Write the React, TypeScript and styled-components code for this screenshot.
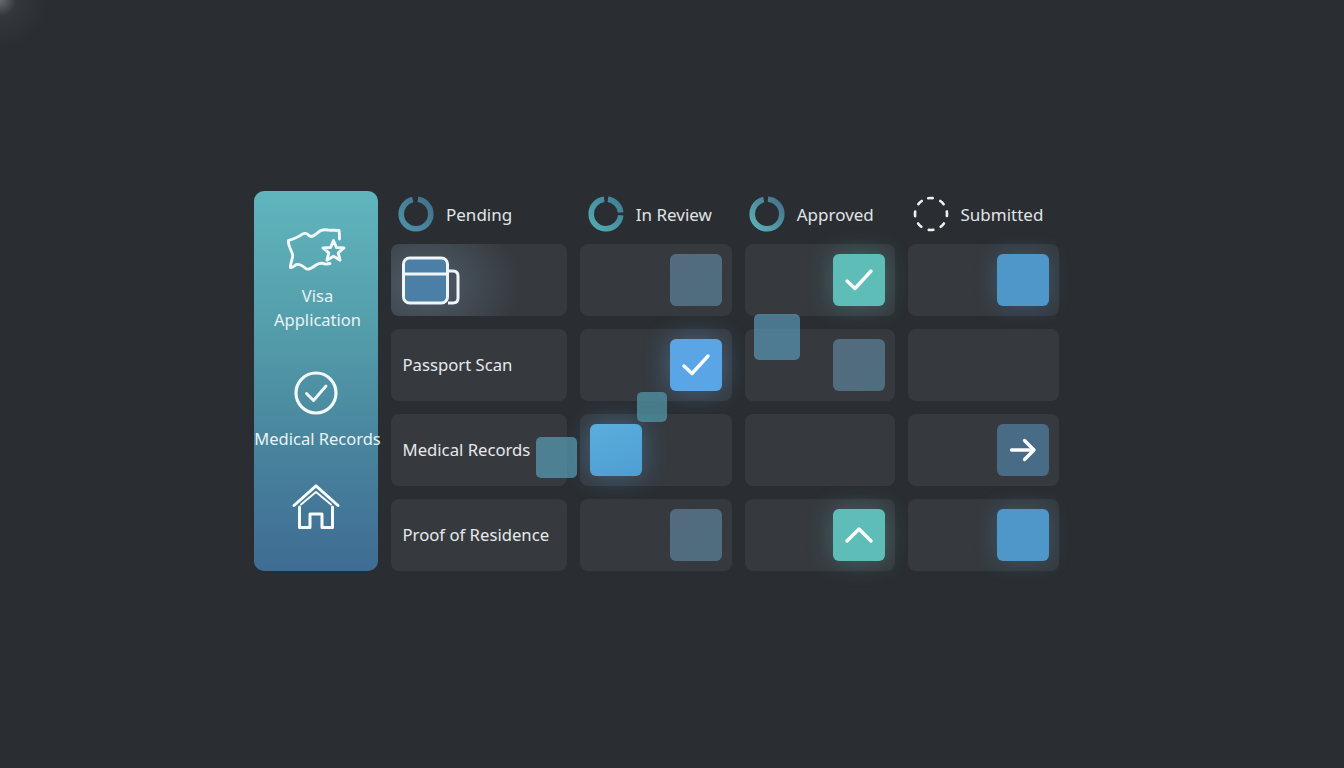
import styled, { createGlobalStyle, css } from "styled-components";

const GlobalStyle = createGlobalStyle`
  html, body {
    margin: 0;
    padding: 0;
    height: 100%;
    background: #2a2e32;
  }
  body {
    font-family: "Noto Sans", "Open Sans", sans-serif;
    overflow: hidden;
  }
`;

const Page = styled.div`
  width: 1344px;
  height: 768px;
  box-sizing: border-box;
  padding: 191px 0 0 254px;
  background:
    radial-gradient(circle at 0 0, rgba(190, 195, 200, 0.42) 0, rgba(120, 125, 130, 0.12) 16px, rgba(42, 46, 50, 0) 48px),
    #2a2e32;
`;

const Board = styled.div`
  position: relative;
  display: flex;
  gap: 13px;
  width: 805px;
`;

const Sidebar = styled.nav`
  width: 124px;
  height: 380px;
  box-sizing: border-box;
  padding-top: 37px;
  display: flex;
  flex-direction: column;
  align-items: center;
  border-radius: 10px;
  background: linear-gradient(180deg, #60b5bd 0%, #549eab 35%, #47829c 70%, #3f6c93 100%);
  color: #e9f3f5;
`;

const NavItem = styled.div<{ $after: number; $gap: number }>`
  display: flex;
  flex-direction: column;
  align-items: center;
  gap: ${(p) => p.$gap}px;
  margin-bottom: ${(p) => p.$after}px;
`;

const NavLabel = styled.div`
  font-size: 16.5px;
  line-height: 24px;
  padding-left: 3px;
  text-align: center;
  white-space: nowrap;
`;

const Table = styled.div`
  display: grid;
  grid-template-columns: 176px 152.25px 150px 151px;
  grid-template-rows: 40px repeat(4, 72px);
  column-gap: 12.75px;
  row-gap: 13px;
`;

const HeaderCell = styled.div<{ $inset: number }>`
  display: flex;
  align-items: center;
  gap: 12px;
  padding-left: ${(p) => p.$inset}px;
  height: 46px;
  color: #e0e4e6;
  font-size: 17px;
`;

const Cell = styled.div<{ $glow?: boolean; $start?: boolean }>`
  display: flex;
  align-items: center;
  justify-content: ${(p) => (p.$start ? "flex-start" : "flex-end")};
  box-sizing: border-box;
  padding: 0 10px;
  border-radius: 8px;
  background: #363a3f;
  ${(p) =>
    p.$glow &&
    css`
      background: radial-gradient(ellipse 95px 75px at 35px 40px, #4f5e6a 0, #3e454c 65%, #363a3f 100%);
    `}
`;

const RowLabel = styled(Cell)`
  justify-content: flex-start;
  padding: 0 0 2px 11.5px;
  font-size: 16.7px;
  color: #e6e9eb;
  white-space: nowrap;
`;

const tones = {
  muted: css`
    background: linear-gradient(135deg, #536c7e, #4f6d7f);
  `,
  slate: css`
    background: #486b86;
  `,
  teal: css`
    background: #5fbdb8;
    box-shadow: 0 0 24px rgba(96, 189, 185, 0.34);
  `,
  blue: css`
    background: #4f97c8;
    box-shadow: 0 0 22px rgba(79, 151, 210, 0.3);
  `,
  bright: css`
    background: #5aa5e6;
    box-shadow: 0 0 26px rgba(90, 165, 230, 0.42);
  `,
  sky: css`
    background: linear-gradient(160deg, #5aaedd, #4f9dd3);
    box-shadow: 0 0 26px rgba(80, 160, 225, 0.42);
  `,
};

const Tile = styled.div<{ $tone: keyof typeof tones }>`
  width: 52px;
  height: 52px;
  flex: none;
  display: flex;
  align-items: center;
  justify-content: center;
  border-radius: 6px;
  ${(p) => tones[p.$tone]}
`;

const Floater = styled.div<{ $x: number; $y: number; $size: number; $color: string }>`
  position: absolute;
  left: ${(p) => p.$x}px;
  top: ${(p) => p.$y}px;
  width: ${(p) => p.$size}px;
  height: ${(p) => p.$size}px;
  border-radius: 5px;
  background: ${(p) => p.$color};
`;

function Ring({ id, from, to, dash, offset }: { id: string; from: string; to: string; dash: string; offset: number }) {
  return (
    <svg width="36" height="36" viewBox="0 0 36 36" fill="none">
      <defs>
        <linearGradient id={id} x1="0" y1="0" x2="1" y2="1">
          <stop offset="0" stopColor={from} />
          <stop offset="1" stopColor={to} />
        </linearGradient>
      </defs>
      <circle
        cx="18"
        cy="18"
        r="14.8"
        stroke={`url(#${id})`}
        strokeWidth="5.6"
        strokeDasharray={dash}
        strokeDashoffset={offset}
        transform="rotate(-90 18 18)"
      />
    </svg>
  );
}

function DashedRing() {
  return (
    <svg width="36" height="36" viewBox="0 0 36 36" fill="none">
      <circle
        cx="18"
        cy="18"
        r="16"
        stroke="#eef0f2"
        strokeWidth="2.6"
        strokeLinecap="round"
        strokeDasharray="4.6 8"
        transform="rotate(-100 18 18)"
      />
    </svg>
  );
}

function MapIcon() {
  return (
    <svg width="60" height="44" viewBox="0 0 60 44" fill="none" stroke="#f2f8f9" strokeWidth="2.9" strokeLinejoin="round" strokeLinecap="round">
      <path d="M39 36 C35 34 33 35.5 30 37 C26 40 23 42 20.5 41 C17 38 13 36 10.5 36.5 C8 38 6 40 4.5 39.5 C4 35 7.5 30 6.5 26.5 C5 21 1.5 17 2.5 12.5 C7 11 12 9.5 15 7 C18 4.5 21 5 23 7.5 C25.5 10 29 7 32 4.5 C35 1.5 39 1.5 42 2 C46 2.5 50 2 53 2.5 C53.5 5 53.5 8 53.5 11" />
      <path d="M41 36 L44 35.5" />
      <path d="M47.5 12.5 L50.4 19.5 L58 20 L52.2 24.8 L54.1 32.2 L47.5 28.2 L40.9 32.2 L42.8 24.8 L37 20 L44.6 19.5 Z" />
    </svg>
  );
}

function CheckCircleIcon() {
  return (
    <svg width="44" height="44" viewBox="0 0 44 44" fill="none" stroke="#f2f8f9" strokeLinecap="round" strokeLinejoin="round">
      <circle cx="22" cy="22" r="20" strokeWidth="3.2" />
      <path d="M12.5 22.5 L19.5 29.5 L32 15" strokeWidth="2.9" />
    </svg>
  );
}

function HomeIcon() {
  return (
    <svg width="48" height="46" viewBox="0 0 48 46" fill="none" stroke="#f6fafb" strokeWidth="3" strokeLinecap="round" strokeLinejoin="round">
      <path d="M2 21.5 L24 1.8 L46 21.5" />
      <path d="M7.5 23 V43.5 H18 V30 H30 V43.5 H40.5 V23" />
      <path d="M9 20.5 L24 8 L39 20.5" strokeWidth="2" />
    </svg>
  );
}

function CardsIcon() {
  return (
    <svg width="60" height="50" viewBox="0 0 60 50" fill="none" stroke="#f0f5f8" strokeWidth="3" strokeLinejoin="round">
      <rect x="2.5" y="3" width="44" height="45" rx="6" fill="#4c7fa6" />
      <path d="M2.5 19 H46.5" />
      <path d="M47 16 H52 Q57 16 57 21 V43 Q57 48 52 48 H47" />
    </svg>
  );
}

function Check() {
  return (
    <svg width="30" height="24" viewBox="0 0 30 24" fill="none" stroke="#fbfdfd" strokeWidth="3.4" strokeLinecap="round" strokeLinejoin="round">
      <path d="M3 13 L11 20.5 L27 3" />
    </svg>
  );
}

function ArrowRight() {
  return (
    <svg width="28" height="24" viewBox="0 0 28 24" fill="none" stroke="#fbfdfd" strokeWidth="3.4" strokeLinecap="round" strokeLinejoin="round">
      <path d="M2.5 12 H24.5" />
      <path d="M15.5 2.5 L25 12 L15.5 21.5" />
    </svg>
  );
}

function ChevronUp() {
  return (
    <svg width="28" height="18" viewBox="0 0 28 18" fill="none" stroke="#fbfdfd" strokeWidth="3.4" strokeLinecap="round" strokeLinejoin="round">
      <path d="M2 15 L14 3 L26 15" />
    </svg>
  );
}

export default function App() {
  return (
    <Page>
      <GlobalStyle />
      <Board>
        <Sidebar>
          <NavItem $gap={12} $after={39}>
            <MapIcon />
            <NavLabel>
              Visa
              <br />
              Application
            </NavLabel>
          </NavItem>
          <NavItem $gap={12} $after={33}>
            <CheckCircleIcon />
            <NavLabel>Medical Records</NavLabel>
          </NavItem>
          <HomeIcon />
        </Sidebar>

        <Table>
          <HeaderCell $inset={7}>
            <Ring id="r1" from="#4f92a8" to="#41708c" dash="87 6" offset={-2} />
            Pending
          </HeaderCell>
          <HeaderCell $inset={8}>
            <Ring id="r2" from="#55abb3" to="#3f7f94" dash="19.5 3 66 4.5" offset={-2} />
            In Review
          </HeaderCell>
          <HeaderCell $inset={4}>
            <Ring id="r3" from="#5cb3b8" to="#44708a" dash="88 5" offset={-1} />
            Approved
          </HeaderCell>
          <HeaderCell $inset={5}>
            <DashedRing />
            Submitted
          </HeaderCell>

          <Cell $glow $start>
            <CardsIcon />
          </Cell>
          <Cell>
            <Tile $tone="muted" />
          </Cell>
          <Cell>
            <Tile $tone="teal">
              <Check />
            </Tile>
          </Cell>
          <Cell>
            <Tile $tone="blue" />
          </Cell>

          <RowLabel>Passport Scan</RowLabel>
          <Cell>
            <Tile $tone="bright">
              <Check />
            </Tile>
          </Cell>
          <Cell>
            <Tile $tone="muted" />
          </Cell>
          <Cell />

          <RowLabel>Medical Records</RowLabel>
          <Cell $start>
            <Tile $tone="sky" />
          </Cell>
          <Cell />
          <Cell>
            <Tile $tone="slate">
              <ArrowRight />
            </Tile>
          </Cell>

          <RowLabel>Proof of Residence</RowLabel>
          <Cell>
            <Tile $tone="muted" />
          </Cell>
          <Cell>
            <Tile $tone="teal">
              <ChevronUp />
            </Tile>
          </Cell>
          <Cell>
            <Tile $tone="blue" />
          </Cell>
        </Table>

        <Floater $x={500} $y={123} $size={46} $color="rgba(88, 148, 178, 0.72)" />
        <Floater $x={383} $y={201} $size={30} $color="rgba(82, 150, 165, 0.75)" />
        <Floater $x={282} $y={246} $size={41} $color="rgba(88, 155, 180, 0.72)" />
      </Board>
    </Page>
  );
}
